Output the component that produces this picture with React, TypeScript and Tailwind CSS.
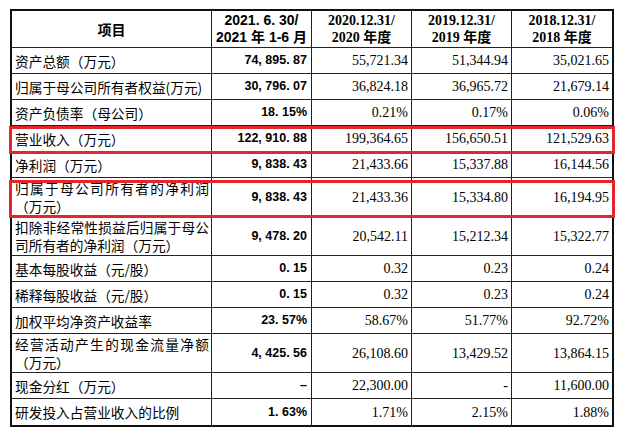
import React from "react";

type Row = { label: string; v: string[]; tall?: boolean };

const rows: Row[] = [
  { label: "资产总额（万元）", v: ["74, 895. 87", "55,721.34", "51,344.94", "35,021.65"] },
  { label: "归属于母公司所有者权益(万元)", v: ["30, 796. 07", "36,824.18", "36,965.72", "21,679.14"] },
  { label: "资产负债率（母公司）", v: ["18. 15%", "0.21%", "0.17%", "0.06%"] },
  { label: "营业收入（万元）", v: ["122, 910. 88", "199,364.65", "156,650.51", "121,529.63"] },
  { label: "净利润（万元）", v: ["9, 838. 43", "21,433.66", "15,337.88", "16,144.56"] },
  { label: "归属于母公司所有者的净利润（万元）", v: ["9, 838. 43", "21,433.36", "15,334.80", "16,194.95"], tall: true },
  { label: "扣除非经常性损益后归属于母公司所有者的净利润（万元）", v: ["9, 478. 20", "20,542.11", "15,212.34", "15,322.77"], tall: true },
  { label: "基本每股收益（元/股）", v: ["0. 15", "0.32", "0.23", "0.24"] },
  { label: "稀释每股收益（元/股）", v: ["0. 15", "0.32", "0.23", "0.24"] },
  { label: "加权平均净资产收益率", v: ["23. 57%", "58.67%", "51.77%", "92.72%"] },
  { label: "经营活动产生的现金流量净额（万元）", v: ["4, 425. 56", "26,108.60", "13,429.52", "13,864.15"], tall: true },
  { label: "现金分红（万元）", v: ["–", "22,300.00", "-", "11,600.00"] },
  { label: "研发投入占营业收入的比例", v: ["1. 63%", "1.71%", "2.15%", "1.88%"] },
];

const serifHeads = [
  ["2020.12.31/", "2020 年度"],
  ["2019.12.31/", "2019 年度"],
  ["2018.12.31/", "2018 年度"],
];

export default function App() {
  return (
    <div className="relative w-[624px] h-[436px] bg-white overflow-hidden pt-[9px] pl-[10px] text-black">
      <div className="w-[604px] border-2 border-[#111]">
        {/* header */}
        <div className="grid grid-cols-[200px_100px_100px_100px_100px] h-[37px] border-b border-[#222]">
          <div className="border-r border-[#222] flex items-center justify-center font-['Noto_Sans_CJK_SC',sans-serif] font-bold text-[14px]">
            项目
          </div>
          <div className="border-r border-[#222] flex flex-col items-center justify-center font-['Liberation_Sans','Noto_Sans_CJK_SC',sans-serif] font-bold text-[14px] leading-[17px]">
            <span>2021. 6. 30/</span>
            <span>2021 年 1-6 月</span>
          </div>
          {serifHeads.map((h, i) => (
            <div
              key={i}
              className={`${i < 2 ? "border-r border-[#222]" : ""} flex flex-col items-center justify-center font-['Liberation_Serif','Noto_Sans_CJK_SC',serif] font-bold text-[14px] leading-[17px]`}
            >
              <span>{h[0]}</span>
              <span>{h[1]}</span>
            </div>
          ))}
        </div>
        {rows.map((r, ri) => (
          <div
            key={ri}
            className={`grid grid-cols-[200px_100px_100px_100px_100px] ${r.tall ? "h-[39px]" : "h-[26px]"} ${ri < rows.length - 1 ? "border-b border-[#222]" : ""}`}
          >
            <div className="border-r border-[#222] flex items-center pl-[3px] pr-[2px] font-['Noto_Sans_CJK_SC',sans-serif] text-[13.7px] leading-[18px]">
              <div className="w-full text-justify">{r.label}</div>
            </div>
            <div className="border-r border-[#222] flex items-center justify-end pr-[4px] font-['Liberation_Sans','Noto_Sans_CJK_SC',sans-serif] font-bold text-[12.5px] whitespace-pre">
              {r.v[0]}
            </div>
            {r.v.slice(1).map((x, i) => (
              <div
                key={i}
                className={`${i < 2 ? "border-r border-[#222]" : ""} flex items-center justify-end pr-[3px] font-['Liberation_Serif',serif] text-[14px]`}
              >
                {x}
              </div>
            ))}
          </div>
        ))}
      </div>
      {/* red highlight boxes */}
      <div className="absolute left-[9px] top-[126px] w-[606px] h-[28px] border-[3px] border-[#e4262a]" />
      <div className="absolute left-[9px] top-[180px] w-[606px] h-[38px] border-[3px] border-[#e4262a]" />
    </div>
  );
}
